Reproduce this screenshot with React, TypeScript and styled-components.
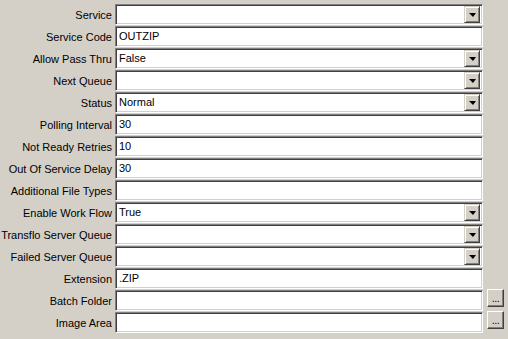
import React from 'react';
import styled, { createGlobalStyle } from 'styled-components';

const Global = createGlobalStyle`
  html, body {
    margin: 0;
    padding: 0;
    background: #d4d0c8;
  }
  body {
    font-family: "Liberation Sans", Arial, sans-serif;
    font-size: 11px;
    color: #000;
  }
`;

const Form = styled.div`
  width: 508px;
  height: 339px;
  padding-top: 4px;
  box-sizing: border-box;
  display: flex;
  flex-direction: column;
  gap: 1px;
`;

const Row = styled.div`
  display: flex;
  align-items: center;
  height: 21px;
`;

const Label = styled.div`
  width: 112px;
  text-align: right;
  margin-right: 3px;
  white-space: nowrap;
`;

const Sunken = styled.div`
  width: 368px;
  height: 21px;
  box-sizing: border-box;
  background: #fff;
  border: 1px solid;
  border-color: #808080 #fff #fff #808080;
  box-shadow: inset 1px 1px #404040, inset -1px -1px #d4d0c8;
  display: flex;
  align-items: center;
  padding: 2px;
`;

const Value = styled.div`
  flex: 1;
  padding-left: 1px;
  line-height: 17px;
  white-space: nowrap;
  overflow: hidden;
`;

const DropButton = styled.div`
  width: 16px;
  height: 17px;
  box-sizing: border-box;
  background: #d4d0c8;
  border: 1px solid;
  border-color: #d4d0c8 #404040 #404040 #d4d0c8;
  box-shadow: inset 1px 1px #fff, inset -1px -1px #808080;
  display: flex;
  align-items: center;
  justify-content: center;
`;

const Arrow = styled.div`
  width: 0;
  height: 0;
  border-left: 4px solid transparent;
  border-right: 3px solid transparent;
  border-top: 4px solid #000;
  margin-top: 1px;
`;

const Browse = styled.div`
  align-self: flex-start;
  margin-top: -1px;
  width: 17px;
  height: 18px;
  margin-left: 4px;
  box-sizing: border-box;
  background: #d4d0c8;
  border: 1px solid;
  border-color: #fff #404040 #404040 #fff;
  box-shadow: inset -1px -1px #808080;
  display: flex;
  align-items: flex-end;
  justify-content: center;
  padding-bottom: 2px;
  line-height: 12px;
  font-size: 11px;
  letter-spacing: -0.5px;
`;

type Field = {
  label: string;
  value?: string;
  kind: 'text' | 'combo' | 'browse';
};

const fields: Field[] = [
  { label: 'Service', kind: 'combo' },
  { label: 'Service Code', value: 'OUTZIP', kind: 'text' },
  { label: 'Allow Pass Thru', value: 'False', kind: 'combo' },
  { label: 'Next Queue', kind: 'combo' },
  { label: 'Status', value: 'Normal', kind: 'combo' },
  { label: 'Polling Interval', value: '30', kind: 'text' },
  { label: 'Not Ready Retries', value: '10', kind: 'text' },
  { label: 'Out Of Service Delay', value: '30', kind: 'text' },
  { label: 'Additional File Types', kind: 'text' },
  { label: 'Enable Work Flow', value: 'True', kind: 'combo' },
  { label: 'Transflo Server Queue', kind: 'combo' },
  { label: 'Failed Server Queue', kind: 'combo' },
  { label: 'Extension', value: '.ZIP', kind: 'text' },
  { label: 'Batch Folder', kind: 'browse' },
  { label: 'Image Area', kind: 'browse' },
];

const App = () => {
  return (
    <>
      <Global />
      <Form>
        {fields.map((f) => (
          <Row key={f.label}>
            <Label>{f.label}</Label>
            <Sunken>
              <Value>{f.value || ''}</Value>
              {f.kind === 'combo' && (
                <DropButton>
                  <Arrow />
                </DropButton>
              )}
            </Sunken>
            {f.kind === 'browse' && <Browse>...</Browse>}
          </Row>
        ))}
      </Form>
    </>
  );
};

export default App;
